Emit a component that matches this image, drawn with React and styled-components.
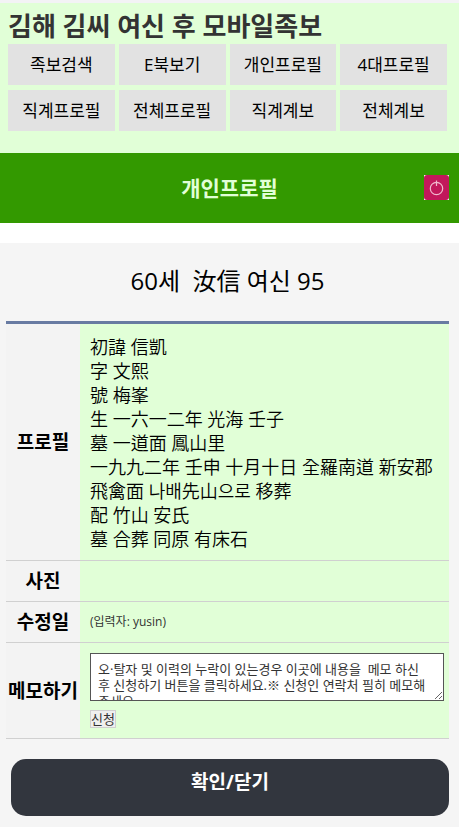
import React from 'react';
import styled, { createGlobalStyle } from 'styled-components';

const GlobalStyle = createGlobalStyle`
    * {
        box-sizing: border-box;
    }

    body {
        margin: 0;
        background: #f5f5f5;
        color: #000;
        font-family: 'Open Sans', 'Noto Sans CJK KR', sans-serif;
    }
`

const Header = styled.header`
    padding: 6px 12px 22px 8px;
    border-top: 3px solid #f3f3f5;
    background: #e1ffd7;
`

const SiteTitle = styled.h1`
    margin: 0;
    color: #333;
    font-size: 26px;
    line-height: 35px;
    white-space: nowrap;
`

const Menu = styled.nav`
    display: grid;
    grid-template-columns: repeat(4, 1fr);
    gap: 5px 4px;
`

const MenuLink = styled.a`
    background: #e2e2e2;
    color: #000;
    font-size: 17px;
    line-height: 41px;
    text-align: center;
    text-decoration: none;
    white-space: nowrap;
`

const BarWrap = styled.div`
    padding-bottom: 20px;
    background: #fff;
`

const Bar = styled.div`
    display: grid;
    grid-template-columns: 1fr auto 1fr;
    align-items: start;
    height: 70px;
    padding: 22px 10px 0;
    background: #390;
`

const BarTitle = styled.h2`
    grid-column: 2;
    margin: 0;
    color: #e1ffd7;
    font-size: 21px;
    line-height: 26px;
`

const PowerButton = styled.button`
    justify-self: end;
    width: 25px;
    height: 25px;
    padding: 0;
    border: 0;
    background: none;
    cursor: pointer;

    svg {
        display: block;
    }
`

const Person = styled.h3`
    margin: 0;
    padding: 20px 10px 22px 6px;
    font-size: 24px;
    font-weight: 400;
    line-height: 36px;
    text-align: center;
    white-space: pre-wrap;
`

const Content = styled.main`
    padding: 0 10px 11px 6px;
`

const Table = styled.table`
    width: 100%;
    border-top: 3px solid #687ba2;
    border-spacing: 0;
`

const Label = styled.th`
    width: 74px;
    height: 41px;
    padding: 0;
    border-bottom: 1px solid #d0d0d0;
    background: #f3f3f3;
    font-size: 19px;
    line-height: 24px;
    white-space: nowrap;
`

const Value = styled.td`
    padding: ${props => props.$padding || '0 10px'};
    border-bottom: 1px solid #d0d0d0;
    background: #e1ffd7;
    color: ${props => props.$size ? '#333' : '#000'};
    font-size: ${props => props.$size || '18px'};
    font-weight: ${props => props.$size ? 400 : 350};
    line-height: 24px;
`

const Memo = styled.textarea`
    display: block;
    width: 100%;
    height: 48px;
    margin-bottom: 9px;
    padding: 7px 14px 0 7px;
    border: 1px solid #555;
    border-radius: 0;
    background: #fff;
    color: #333;
    font: inherit;
    line-height: 16px;
    overflow: hidden;
    resize: vertical;
`

const SendButton = styled.button`
    display: block;
    height: 18px;
    padding: 0;
    border: 1px solid #d0d0d0;
    background: #efefef;
    color: #333;
    font: inherit;
    line-height: 16px;
`

const CloseButton = styled.button`
    display: block;
    width: calc(100% - 5px);
    margin: 20px 0 0 5px;
    padding: 8px 0 19px;
    border: 0;
    border-radius: 15px;
    background: #32363e;
    color: #fff;
    font-family: inherit;
    font-size: 19px;
    font-weight: 700;
    line-height: 30px;
`

const menu = [
    '족보검색', 'E북보기', '개인프로필', '4대프로필',
    '직계프로필', '전체프로필', '직계계보', '전체계보',
]

const profile = [
    '初諱 信凱',
    '字 文熙',
    '號 梅峯',
    '生 一六一二年 光海 壬子',
    '墓 一道面 鳳山里',
    '一九九二年 壬申 十月十日 全羅南道 新安郡 飛禽面 나배先山으로 移葬',
    '配 竹山 安氏',
    '墓 合葬 同原 有床石',
]

const PowerIcon = () => (
    <svg width="25" height="25" viewBox="0 0 25 25" fill="none" aria-hidden="true">
        <rect width="25" height="25" fill="#fff" />
        <rect width="25" height="25" rx="3" fill="#c2185b" />
        <circle cx="12.5" cy="13.5" r="6.2" stroke="#f0b9ce" strokeWidth="1.2" />
        <path d="M12.5 5.5v5.5" stroke="#f0b9ce" strokeWidth="1.2" />
    </svg>
)

export default function App() {
    return (
        <React.Fragment>
            <GlobalStyle />
            <Header>
                <SiteTitle>김해 김씨 여신 후 모바일족보</SiteTitle>
                <Menu>
                    {menu.map(name => (
                        <MenuLink key={name} href="#">{name}</MenuLink>
                    ))}
                </Menu>
            </Header>
            <BarWrap>
                <Bar>
                    <BarTitle>개인프로필</BarTitle>
                    <PowerButton type="button" aria-label="로그아웃">
                        <PowerIcon />
                    </PowerButton>
                </Bar>
            </BarWrap>
            <Person>{'60세  汝信 여신 95'}</Person>
            <Content>
                <Table>
                    <tbody>
                        <tr>
                            <Label scope="row">프로필</Label>
                            <Value $padding="11px 10px 9px">
                                {profile.map(line => (
                                    <div key={line}>{line}</div>
                                ))}
                            </Value>
                        </tr>
                        <tr>
                            <Label scope="row">사진</Label>
                            <Value />
                        </tr>
                        <tr>
                            <Label scope="row">수정일</Label>
                            <Value $size="12px">(입력자: yusin)</Value>
                        </tr>
                        <tr>
                            <Label scope="row"><label htmlFor="memo">메모하기</label></Label>
                            <Value $size="13px" $padding="10px 5px 10px 10px">
                                <Memo
                                    id="memo"
                                    defaultValue="오·탈자 및 이력의 누락이 있는경우 이곳에 내용을  메모 하신 후 신청하기 버튼을 클릭하세요.※ 신청인 연락처 필히 메모해 주세요"
                                />
                                <SendButton type="button">신청</SendButton>
                            </Value>
                        </tr>
                    </tbody>
                </Table>
                <CloseButton type="button">확인/닫기</CloseButton>
            </Content>
        </React.Fragment>
    );
}
